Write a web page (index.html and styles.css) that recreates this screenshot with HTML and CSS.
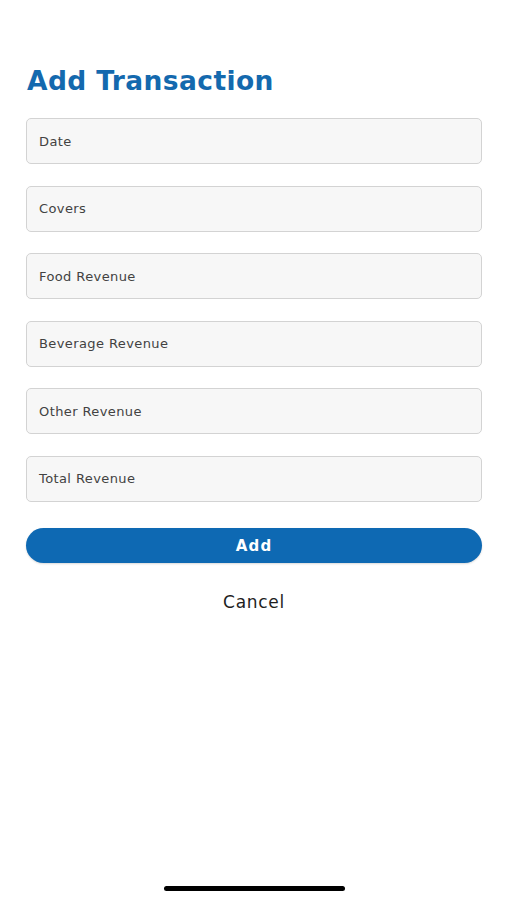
FILE: index.html
```html
<!DOCTYPE html>
<html lang="en">
<head>
<meta charset="utf-8">
<title>Add Transaction</title>
<link rel="stylesheet" href="styles.css">
</head>
<body>
<main class="screen">
  <h1 class="title">Add Transaction</h1>
  <form class="form">
    <div class="field">Date</div>
    <div class="field">Covers</div>
    <div class="field">Food Revenue</div>
    <div class="field">Beverage Revenue</div>
    <div class="field">Other Revenue</div>
    <div class="field">Total Revenue</div>
    <button type="button" class="btn-add">Add</button>
    <button type="button" class="btn-cancel">Cancel</button>
  </form>
  <div class="home-indicator"></div>
</main>
</body>
</html>
```
FILE: styles.css
```css
* { box-sizing: border-box; }
html, body {
  margin: 0;
  padding: 0;
  background: #ffffff;
}
body {
  font-family: "DejaVu Sans", "Liberation Sans", sans-serif;
  width: 507px;
  height: 900px;
  overflow: hidden;
}
.screen {
  position: relative;
  height: 900px;
  padding: 0 25px 0 26px;
}
.title {
  margin: 0 0 0 1px;
  padding-top: 66px;
  font-size: 26.5px;
  line-height: 30px;
  font-weight: 700;
  letter-spacing: 0.4px;
  color: #1469ae;
}
.form {
  display: flex;
  flex-direction: column;
  margin-top: 22px;
}
.field {
  height: 46px;
  margin-bottom: 21.5px;
  background: #f7f7f7;
  border: 1.5px solid #d3d3d3;
  border-radius: 5px;
  padding: 0 0 0 12px;
  display: flex;
  align-items: center;
  font-size: 13px;
  letter-spacing: 0.4px;
  color: #424242;
}
.btn-add {
  margin-top: 5px;
  height: 35px;
  border: none;
  border-radius: 18px;
  background: #0e69b3;
  color: #ffffff;
  font-family: inherit;
  font-size: 15px;
  font-weight: 700;
  letter-spacing: 1.2px;
  box-shadow: 0 1px 2px rgba(0,0,0,0.15);
  padding: 0;
}
.btn-cancel {
  margin-top: 29px;
  align-self: center;
  border: none;
  background: none;
  padding: 0;
  font-family: inherit;
  font-size: 17px;
  letter-spacing: 0.7px;
  color: #1e1e1e;
}
.home-indicator {
  position: absolute;
  left: 164px;
  top: 886px;
  width: 181px;
  height: 5px;
  border-radius: 3px;
  background: #000;
}
```
